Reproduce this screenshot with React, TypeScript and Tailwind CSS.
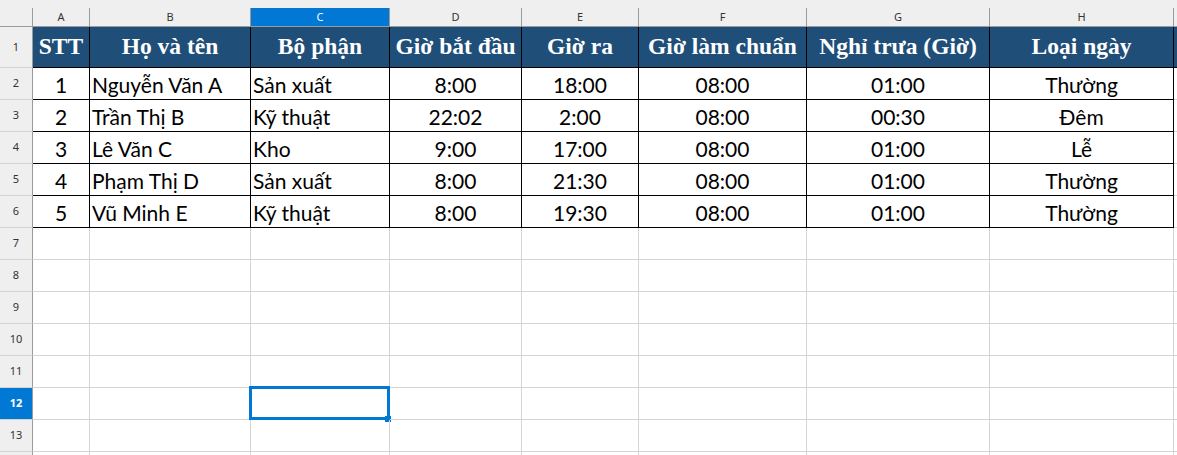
import React from 'react';

const cols = [
  { key: 'A', w: 'w-[57px]' },
  { key: 'B', w: 'w-[161px]' },
  { key: 'C', w: 'w-[139px]' },
  { key: 'D', w: 'w-[132px]' },
  { key: 'E', w: 'w-[117px]' },
  { key: 'F', w: 'w-[168px]' },
  { key: 'G', w: 'w-[183px]' },
  { key: 'H', w: 'w-[184px]' },
];

const headers = ['STT', 'Họ và tên', 'Bộ phận', 'Giờ bắt đầu', 'Giờ ra', 'Giờ làm chuẩn', 'Nghỉ trưa (Giờ)', 'Loại ngày'];

const rows = [
  ['1', 'Nguyễn Văn A', 'Sản xuất', '8:00', '18:00', '08:00', '01:00', 'Thường'],
  ['2', 'Trần Thị B', 'Kỹ thuật', '22:02', '2:00', '08:00', '00:30', 'Đêm'],
  ['3', 'Lê Văn C', 'Kho', '9:00', '17:00', '08:00', '01:00', 'Lễ'],
  ['4', 'Phạm Thị D', 'Sản xuất', '8:00', '21:30', '08:00', '01:00', 'Thường'],
  ['5', 'Vũ Minh E', 'Kỹ thuật', '8:00', '19:30', '08:00', '01:00', 'Thường'],
];

const leftAligned = [1, 2];

function RowHead({ n, active }: { n?: number; active?: boolean }) {
  return (
    <div
      className={`w-[33px] shrink-0 flex items-center justify-center border-r border-b border-r-[#9b9b9b] border-b-[#d4d4d4] text-[11px] ${
        active ? 'bg-[#0078d4] text-white font-bold' : 'bg-[#efefef] text-[#333]'
      }`}
    >
      {n}
    </div>
  );
}

export default function App() {
  return (
    <div className="w-[1177px] h-[455px] overflow-hidden bg-white font-['Noto_Sans',sans-serif] select-none">
      {/* toolbar remnant */}
      <div className="h-[8px] bg-[#efefef]" />

      {/* column letters */}
      <div className="flex h-[19px] bg-[#efefef] border-b border-[#9b9b9b]">
        <div className="w-[33px] shrink-0 border-r border-[#9b9b9b]" />
        {cols.map((c) => (
          <div
            key={c.key}
            className={`${c.w} shrink-0 flex items-center justify-center text-[11px] border-r border-[#9b9b9b] ${
              c.key === 'C' ? 'bg-[#0078d4] text-white' : 'text-[#333]'
            }`}
          >
            {c.key}
          </div>
        ))}
        <div className="flex-1" />
      </div>

      {/* row 1: table header */}
      <div className="flex h-[41px]">
        <RowHead n={1} />
        {headers.map((h, i) => (
          <div
            key={h}
            className={`${cols[i].w} shrink-0 flex items-center justify-center bg-[#1f4e79] border-r border-b border-black text-white font-bold text-[23.5px] font-['Liberation_Serif',serif] whitespace-nowrap overflow-hidden`}
          >
            {h}
          </div>
        ))}
        <div className="flex-1 bg-[#1f4e79] border-b border-black" />
      </div>

      {/* data rows */}
      {rows.map((r, ri) => (
        <div key={ri} className="flex h-[32px]">
          <RowHead n={ri + 2} />
          {r.map((v, i) => (
            <div
              key={i}
              className={`${cols[i].w} shrink-0 flex items-center pt-[2px] border-r border-b border-black text-[21px] text-black font-['Lato',sans-serif] whitespace-nowrap overflow-hidden ${
                leftAligned.includes(i) ? 'justify-start pl-[2px]' : 'justify-center'
              }`}
            >
              {v}
            </div>
          ))}
          <div className="flex-1 border-b border-[#d4d4d4]" />
        </div>
      ))}

      {/* empty rows */}
      {[7, 8, 9, 10, 11, 12, 13, 14].map((n) => (
        <div key={n} className="flex h-[32px]">
          <RowHead n={n < 14 ? n : undefined} active={n === 12} />
          {cols.map((c) => (
            <div key={c.key} className={`${c.w} shrink-0 relative border-r border-b border-[#d4d4d4]`}>
              {n === 12 && c.key === 'C' && (
                <>
                  <div className="absolute -left-[2px] -top-[2px] w-[141px] h-[34px] border-[3px] border-[#0078d4]" />
                  <div className="absolute left-[134px] top-[28px] w-[6px] h-[6px] bg-[#0078d4]" />
                </>
              )}
            </div>
          ))}
          <div className="flex-1 border-b border-[#d4d4d4]" />
        </div>
      ))}
    </div>
  );
}
